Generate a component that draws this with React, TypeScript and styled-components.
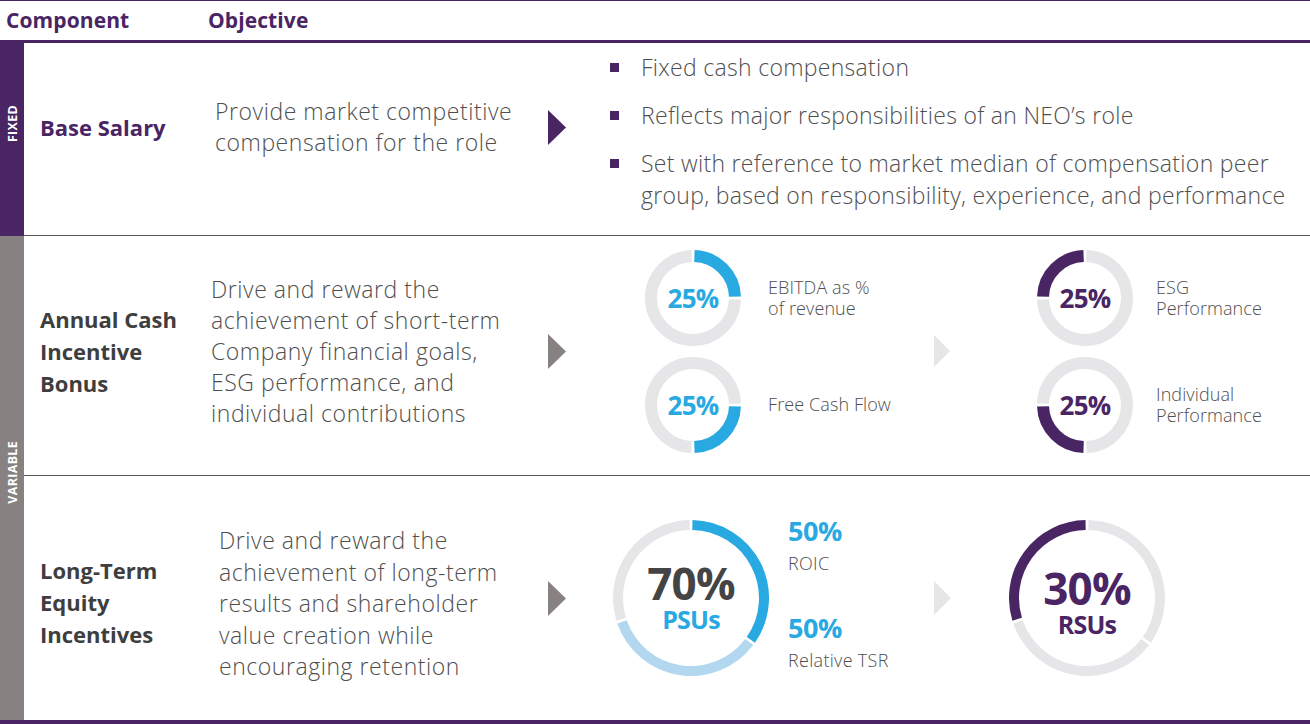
import React from "react";
import styled, { createGlobalStyle } from "styled-components";

const PURPLE = "#4a2564";
const BLUE = "#29a9e1";
const LIGHTBLUE = "#b3d7ef";
const RING = "#e6e6e8";
const SIDEGRAY = "#878281";
const TEXT = "#4f4f4f";
const DARK = "#3e3e3e";

const Global = createGlobalStyle`
  html, body { margin: 0; padding: 0; background: #fff; }
  body { font-family: "Open Sans", "Liberation Sans", sans-serif; color: ${TEXT}; }
  * { box-sizing: border-box; }
`;

const Page = styled.div`
  width: 1310px;
  height: 724px;
  overflow: hidden;
  display: flex;
  flex-direction: column;
  border-top: 1px solid ${PURPLE};
`;

const Header = styled.div`
  height: 42px;
  flex: none;
  display: grid;
  grid-template-columns: 202px 1fr;
  align-items: center;
  padding-left: 6px;
  padding-bottom: 1px;
  border-bottom: 3px solid ${PURPLE};
`;

const HeaderCell = styled.div`
  font-size: 21px;
  font-weight: 700;
  color: ${PURPLE};
  letter-spacing: 0.1px;
`;

const Body = styled.div`
  flex: 1;
  display: flex;
  border-bottom: 4px solid ${PURPLE};
  min-height: 0;
`;

const Side = styled.div`
  width: 24px;
  flex: none;
  display: flex;
  flex-direction: column;
`;

const SideBlock = styled.div<{ $tone: string; $h?: number; $pb: number }>`
  background: ${(p) => p.$tone};
  ${(p) => (p.$h ? `height: ${p.$h}px; flex: none;` : "flex: 1;")}
  display: flex;
  align-items: center;
  justify-content: center;
  padding-bottom: ${(p) => p.$pb}px;
`;

const SideText = styled.span`
  writing-mode: vertical-rl;
  transform: rotate(180deg);
  color: #fff;
  font-size: 12.5px;
  font-weight: 700;
  letter-spacing: 0.3px;
`;

const Rows = styled.div`
  flex: 1;
  display: flex;
  flex-direction: column;
`;

const Row = styled.div<{ $h?: number; $pb?: number; $last?: boolean }>`
  ${(p) => (p.$h ? `height: ${p.$h}px; flex: none;` : "flex: 1;")}
  display: grid;
  grid-template-columns: 187px 337px 18px 1fr;
  align-items: center;
  padding-bottom: ${(p) => p.$pb ?? 0}px;
  border-bottom: ${(p) => (p.$last ? "none" : "1px solid #555")};
`;

const Label = styled.div<{ $color: string; $pt?: number }>`
  padding-left: 16px;
  padding-top: ${(p) => p.$pt ?? 0}px;
  font-size: 22px;
  line-height: 32px;
  font-weight: 700;
  color: ${(p) => p.$color};
  letter-spacing: 0px;
`;

const Objective = styled.div<{ $pl: number; $pt?: number; $lh?: number }>`
  padding-left: ${(p) => p.$pl}px;
  padding-top: ${(p) => p.$pt ?? 0}px;
  font-size: 23px;
  line-height: ${(p) => p.$lh ?? 31}px;
  font-weight: 300;
  color: ${TEXT};
  letter-spacing: 0.55px;
  white-space: nowrap;
`;

const ArrowSvg = styled.svg`
  display: block;
`;

const Arrow = ({ color, w = 18, h = 35 }: { color: string; w?: number; h?: number }) => (
  <ArrowSvg width={w} height={h} viewBox={`0 0 ${w} ${h}`}>
    <polygon points={`0,0 ${w},${h / 2} 0,${h}`} fill={color} />
  </ArrowSvg>
);

const Details = styled.div<{ $pl: number; $top?: boolean }>`
  padding-left: ${(p) => p.$pl}px;
  display: flex;
  align-items: center;
  ${(p) => (p.$top ? "align-self: start; padding-top: 8px;" : "")}
`;

const Bullets = styled.ul`
  list-style: none;
  margin: 0;
  padding: 0 0 0 44px;
  display: flex;
  flex-direction: column;
  gap: 16px;
`;

const BulletItem = styled.li`
  display: flex;
  align-items: flex-start;
  font-size: 23px;
  line-height: 32px;
  font-weight: 300;
  color: ${TEXT};
  letter-spacing: 0.3px;
  white-space: nowrap;
  &::before {
    content: "";
    flex: none;
    width: 9px;
    height: 9px;
    background: ${PURPLE};
    margin: 12px 22px 0 0;
  }
`;

type Seg = { from: number; to: number; color: string };

const DonutWrap = styled.div<{ $size: number }>`
  width: ${(p) => p.$size}px;
  height: ${(p) => p.$size}px;
  flex: none;
  display: grid;
  place-items: center;
  & > * {
    grid-area: 1 / 1;
  }
`;

const Donut = ({
  size,
  stroke,
  segs,
  children,
}: {
  size: number;
  stroke: number;
  segs: Seg[];
  children?: React.ReactNode;
}) => {
  const c = size / 2;
  const r = size / 2 - stroke / 2;
  const gap = 1.4 / r;
  const pt = (a: number) => [c + r * Math.sin(a), c - r * Math.cos(a)];
  return (
    <DonutWrap $size={size}>
      <svg width={size} height={size} viewBox={`0 0 ${size} ${size}`}>
        {segs.map((s, i) => {
          const a0 = s.from * 2 * Math.PI + gap;
          const a1 = s.to * 2 * Math.PI - gap;
          const [x0, y0] = pt(a0);
          const [x1, y1] = pt(a1);
          const large = a1 - a0 > Math.PI ? 1 : 0;
          return (
            <path
              key={i}
              d={`M ${x0} ${y0} A ${r} ${r} 0 ${large} 1 ${x1} ${y1}`}
              fill="none"
              stroke={s.color}
              strokeWidth={stroke}
            />
          );
        })}
      </svg>
      {children}
    </DonutWrap>
  );
};

const CenterStack = styled.div<{ $pt?: number }>`
  display: flex;
  flex-direction: column;
  align-items: center;
  padding-top: ${(p) => p.$pt ?? 0}px;
`;

const Pct = styled.div<{ $color: string; $size: number; $lh?: number }>`
  font-size: ${(p) => p.$size}px;
  line-height: ${(p) => p.$lh ?? p.$size}px;
  font-weight: 700;
  color: ${(p) => p.$color};
  letter-spacing: -0.8px;
`;

const DonutList = styled.div<{ $w?: number; $ml?: number }>`
  display: flex;
  flex-direction: column;
  gap: 11px;
  ${(p) => (p.$w ? `width: ${p.$w}px;` : "")}
  margin-left: ${(p) => p.$ml ?? 0}px;
`;

const DonutItem = styled.div<{ $gap: number }>`
  display: flex;
  align-items: center;
  gap: ${(p) => p.$gap}px;
`;

const SmallLabel = styled.div`
  font-size: 18px;
  line-height: 21px;
  font-weight: 300;
  color: ${TEXT};
  letter-spacing: 0.1px;
`;

const Stats = styled.div`
  width: 146px;
  margin-left: 19px;
  padding-bottom: 10px;
  display: flex;
  flex-direction: column;
  gap: 33px;
`;

const Stat = styled.div`
  display: flex;
  flex-direction: column;
`;

const StatValue = styled.div`
  font-size: 27px;
  line-height: 36px;
  font-weight: 700;
  color: ${BLUE};
  letter-spacing: -0.5px;
`;

const StatLabel = styled.div`
  font-size: 18px;
  line-height: 28px;
  font-weight: 300;
  color: ${TEXT};
  letter-spacing: 0.3px;
`;

const Spacer = styled.div<{ $w: number }>`
  width: ${(p) => p.$w}px;
  flex: none;
`;

const small = (i: number, color: string): Seg[] => {
  const a = i / 4;
  const b = (i + 1) / 4;
  return [
    { from: a, to: b, color },
    { from: b, to: a + 1, color: RING },
  ];
};

const SmallDonut = ({ q, color }: { q: number; color: string }) => (
  <Donut size={96} stroke={12} segs={small(q, color)}>
    <Pct $color={color} $size={26}>
      25%
    </Pct>
  </Donut>
);

export default function App() {
  return (
    <>
      <Global />
      <Page>
        <Header>
          <HeaderCell>Component</HeaderCell>
          <HeaderCell>Objective</HeaderCell>
        </Header>
        <Body>
          <Side>
            <SideBlock $tone={PURPLE} $h={193} $pb={32}>
              <SideText>FIXED</SideText>
            </SideBlock>
            <SideBlock $tone={SIDEGRAY} $pb={12}>
              <SideText>VARIABLE</SideText>
            </SideBlock>
          </Side>
          <Rows>
            <Row $h={193} $pb={24}>
              <Label $color={PURPLE}>Base Salary</Label>
              <Objective $pl={4}>
                Provide market competitive
                <br />
                compensation for the role
              </Objective>
              <Arrow color={PURPLE} />
              <Details $pl={0} $top>
                <Bullets>
                  <BulletItem>Fixed cash compensation</BulletItem>
                  <BulletItem>Reflects major responsibilities of an NEO’s role</BulletItem>
                  <BulletItem>
                    <span>
                      Set with reference to market median of compensation peer
                      <br />
                      group, based on responsibility, experience, and performance
                    </span>
                  </BulletItem>
                </Bullets>
              </Details>
            </Row>
            <Row $h={240} $pb={9}>
              <Label $color={DARK}>
                Annual Cash
                <br />
                Incentive
                <br />
                Bonus
              </Label>
              <Objective $pl={0}>
                Drive and reward the
                <br />
                achievement of short-term
                <br />
                Company financial goals,
                <br />
                ESG performance, and
                <br />
                individual contributions
              </Objective>
              <Arrow color={SIDEGRAY} />
              <Details $pl={79}>
                <DonutList $w={289}>
                  <DonutItem $gap={27}>
                    <SmallDonut q={0} color={BLUE} />
                    <SmallLabel>
                      EBITDA as %
                      <br />
                      of revenue
                    </SmallLabel>
                  </DonutItem>
                  <DonutItem $gap={27}>
                    <SmallDonut q={1} color={BLUE} />
                    <SmallLabel>Free Cash Flow</SmallLabel>
                  </DonutItem>
                </DonutList>
                <Arrow color={RING} w={16} h={32} />
                <DonutList $ml={87}>
                  <DonutItem $gap={23}>
                    <SmallDonut q={3} color={PURPLE} />
                    <SmallLabel>
                      ESG
                      <br />
                      Performance
                    </SmallLabel>
                  </DonutItem>
                  <DonutItem $gap={23}>
                    <SmallDonut q={2} color={PURPLE} />
                    <SmallLabel>
                      Individual
                      <br />
                      Performance
                    </SmallLabel>
                  </DonutItem>
                </DonutList>
              </Details>
            </Row>
            <Row $last>
              <Label $color={DARK} $pt={8}>
                Long-Term
                <br />
                Equity
                <br />
                Incentives
              </Label>
              <Objective $pl={8} $pt={12} $lh={31.5}>
                Drive and reward the
                <br />
                achievement of long-term
                <br />
                results and shareholder
                <br />
                value creation while
                <br />
                encouraging retention
              </Objective>
              <Arrow color={SIDEGRAY} />
              <Details $pl={47}>
                <Donut
                  size={156}
                  stroke={10}
                  segs={[
                    { from: 0, to: 0.35, color: BLUE },
                    { from: 0.35, to: 0.7, color: LIGHTBLUE },
                    { from: 0.7, to: 1, color: RING },
                  ]}
                >
                  <CenterStack>
                    <Pct $color="#444" $size={44} $lh={42}>
                      70%
                    </Pct>
                    <Pct $color={BLUE} $size={25} $lh={30}>
                      PSUs
                    </Pct>
                  </CenterStack>
                </Donut>
                <Stats>
                  <Stat>
                    <StatValue>50%</StatValue>
                    <StatLabel>ROIC</StatLabel>
                  </Stat>
                  <Stat>
                    <StatValue>50%</StatValue>
                    <StatLabel>Relative TSR</StatLabel>
                  </Stat>
                </Stats>
                <Arrow color={RING} w={17} h={34} />
                <Spacer $w={58} />
                <Donut
                  size={156}
                  stroke={10}
                  segs={[
                    { from: 0, to: 0.35, color: RING },
                    { from: 0.35, to: 0.7, color: RING },
                    { from: 0.7, to: 1, color: PURPLE },
                  ]}
                >
                  <CenterStack $pt={10}>
                    <Pct $color={PURPLE} $size={44} $lh={42}>
                      30%
                    </Pct>
                    <Pct $color={PURPLE} $size={25} $lh={30}>
                      RSUs
                    </Pct>
                  </CenterStack>
                </Donut>
              </Details>
            </Row>
          </Rows>
        </Body>
      </Page>
    </>
  );
}
